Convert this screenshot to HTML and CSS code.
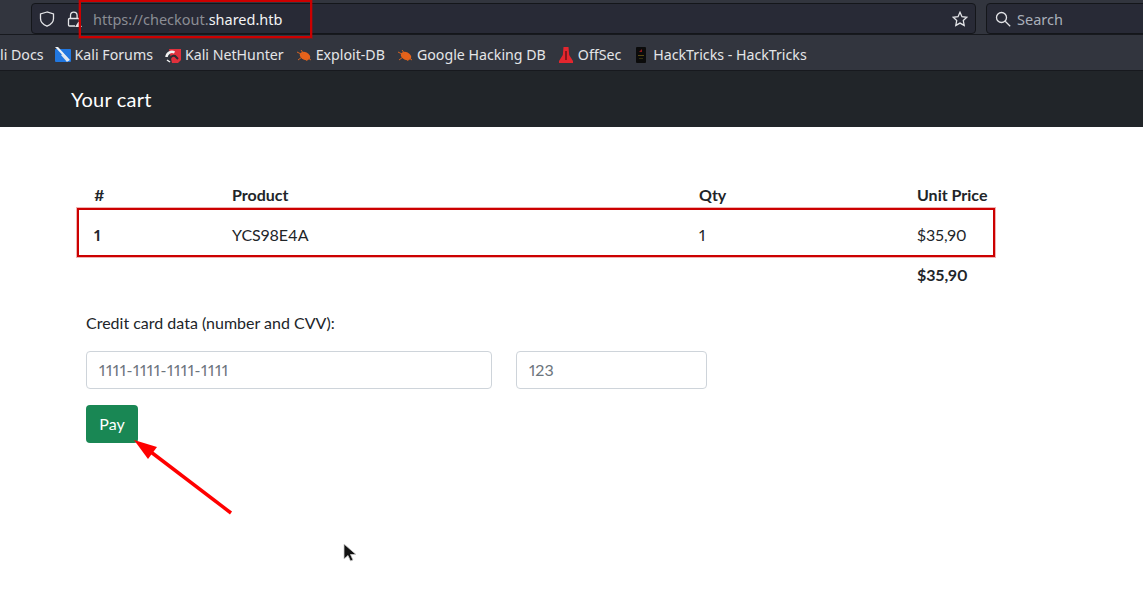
FILE: index.html
```html
<!DOCTYPE html>
<html lang="en">
<head>
    <meta charset="UTF-8">
    <link rel="stylesheet" href="styles.css">
    <title>Your cart</title>
</head>
<body>
    <div class="browser">
        <div class="toolbar">
            <div class="urlbar">
                <svg class="ui-icon shield" viewBox="0 0 16 16"><path d="M8 1 1.500 3v4.600c0 3.600 2.800 6.200 6.500 7.600 3.700-1.400 6.500-4 6.500-7.600V3z"/></svg>
                <svg class="ui-icon lock" viewBox="0 0 16 16">
                    <path d="M4.500 7.500V4.500a3.300 3.300 0 0 1 6.600 0v3"/>
                    <path d="M9 15H3.500a1 1 0 0 1-1-1V8.500a1 1 0 0 1 1-1h9a1 1 0 0 1 1 1v1.500"/>
                    <path class="lock-warn" d="M12.500 10.500 16 16H9z"/>
                </svg>
                <span class="url"><span class="url-dim">https://checkout.</span>shared.htb</span>
                <svg class="ui-icon star" viewBox="0 0 16 16"><path d="M8 1.300 10 5.700l4.800.6-3.500 3.300.9 4.800L8 12.100l-4.200 2.300.9-4.800L1.200 6.300 6 5.700z"/></svg>
            </div>
            <div class="searchbar">
                <svg class="ui-icon" viewBox="0 0 16 16"><circle cx="6.500" cy="6.500" r="5"/><path d="m10.200 10.200 5 5"/></svg>
                <span>Search</span>
            </div>
        </div>
        <div class="bookmarks">
            <span class="bookmark bookmark-first">li Docs</span>
            <span class="bookmark">
                <svg class="favicon" viewBox="0 0 16 16"><rect y="2" width="16" height="13" rx="1" fill="#2177e0"/><path d="M0 0 13 14l2-1L3 0z" fill="#eef2f6"/><path d="M6 8l6 7 2-2-6-6z" fill="#dfe6ee"/></svg>
                Kali Forums
            </span>
            <span class="bookmark">
                <svg class="favicon" viewBox="0 0 16 16"><path d="M4 2h12v11l-3 3H7z" fill="#e0303c"/><path d="M1.500 10a5.500 5.500 0 0 1 8-4.500" fill="none" stroke="#f2f2f2" stroke-width="2.500"/><path d="M5 14a4 4 0 0 1 5-5l3 3" fill="none" stroke="#2b2d33" stroke-width="2"/><path d="M2 13l3 2" stroke="#f2f2f2" stroke-width="1.500"/></svg>
                Kali NetHunter
            </span>
            <span class="bookmark">
                <svg class="favicon" viewBox="0 0 16 16"><ellipse cx="9" cy="9" rx="5.500" ry="3.800" fill="#e8621a" transform="rotate(25 9 9)"/><path d="M1 5l6 3M2 13l4-3M15 13l-3-2M5 3l3 4M11 14l-1-3" stroke="#d9641f" fill="none"/></svg>
                Exploit-DB
            </span>
            <span class="bookmark">
                <svg class="favicon" viewBox="0 0 16 16"><ellipse cx="9" cy="9" rx="5.500" ry="3.800" fill="#e8621a" transform="rotate(25 9 9)"/><path d="M1 5l6 3M2 13l4-3M15 13l-3-2M5 3l3 4M11 14l-1-3" stroke="#d9641f" fill="none"/></svg>
                Google Hacking DB
            </span>
            <span class="bookmark">
                <svg class="favicon" viewBox="0 0 16 16"><path d="M5.500 0h5l.7 8 3.800 6v2H1v-2l3.800-6z" fill="#e3262e"/><path d="M7.400 4h1.200v9H7.400z" fill="#4a0d10"/></svg>
                OffSec
            </span>
            <span class="bookmark">
                <svg class="favicon" viewBox="0 0 16 16"><rect x="3" width="10" height="16" rx="1" fill="#0b0b0b"/><path d="M6 5l3-3v3z" fill="#8e1a1a"/><path d="M5 8h6v1H5z" fill="#5a4a12"/><path d="M6 11h4v1H6z" fill="#33300f"/></svg>
                HackTricks - HackTricks
            </span>
        </div>
    </div>

    <header class="navbar">
        <span class="brand">Your cart</span>
    </header>

    <main class="content">
        <table class="cart">
            <thead>
                <tr>
                    <th class="col-num">#</th>
                    <th class="col-product">Product</th>
                    <th class="col-qty">Qty</th>
                    <th>Unit Price</th>
                </tr>
            </thead>
            <tbody>
                <tr>
                    <th>1</th>
                    <td>YCS98E4A</td>
                    <td>1</td>
                    <td>$35,90</td>
                </tr>
                <tr>
                    <td></td>
                    <td></td>
                    <td></td>
                    <th>$35,90</th>
                </tr>
            </tbody>
        </table>

        <form class="pay-form">
            <label class="card-label" for="number">Credit card data (number and CVV):</label>
            <div class="card-fields">
                <input class="field field-number" type="text" id="number" placeholder="1111-1111-1111-1111">
                <input class="field field-cvv" type="text" id="cvv" placeholder="123">
            </div>
            <button class="pay" type="button">Pay</button>
        </form>
    </main>

    <div class="mark mark-url"></div>
    <div class="mark mark-row"></div>
    <svg class="arrow" viewBox="0 0 1143 596">
        <path d="M231 513 147 449" stroke="#ff0000" stroke-width="3.500" fill="none"/>
        <path d="M134 440 157 447 148 459z" fill="#ff0000"/>
    </svg>
    <svg class="cursor" viewBox="0 0 14 20"><path d="M1 1v15l4-3.500 2.500 5.500 2.500-1-2.500-5.500H13z" fill="#111" stroke="#ccc" stroke-width=".8"/></svg>
</body>
</html>
```

FILE: styles.css
```css
html, body {
  margin: 0;
  height: 596px;
  overflow: hidden;
}

body {
  position: relative;
  background: #fff;
  color: #212529;
  font-family: Lato, sans-serif;
  font-size: 16px;
  font-variant-numeric: proportional-nums;
}

/* browser chrome */
.browser {
  background: #32353e;
  color: #e4e5e8;
  font-family: "Noto Sans", sans-serif;
  font-size: 14.2px;
}

.toolbar {
  display: flex;
  gap: 10px;
  box-sizing: border-box;
  height: 35px;
  padding-top: 3px;
  padding-left: 31px;
  border-bottom: 1px solid #17191e;
}

.urlbar, .searchbar {
  display: flex;
  align-items: center;
  height: 31px;
  background: #282a36;
  border: 1px solid #14161a;
  border-radius: 4px;
  box-sizing: border-box;
}

.urlbar {
  width: 945px;
  padding-left: 7px;
  padding-right: 7px;
  font-size: 14.5px;
}

.searchbar {
  flex: 1;
  padding-left: 8px;
  gap: 6px;
  margin-right: -4px;
  color: #aab0ba;
  font-size: 14.5px;
}

.ui-icon {
  width: 16px;
  height: 16px;
  flex: none;
  fill: none;
  stroke: #e4e5e8;
  stroke-width: 1.300;
}

.lock {
  margin-left: 11px;
}

.lock-warn {
  fill: #e4e5e8;
  stroke: none;
}

.url {
  flex: 1;
  margin-left: 11px;
  color: #f3f3f4;
}

.url-dim {
  color: #8b8d94;
}

.bookmarks {
  display: flex;
  align-items: center;
  gap: 12px;
  box-sizing: border-box;
  height: 36px;
  padding-top: 4px;
  border-bottom: 1px solid #17191e;
}

.bookmark {
  display: flex;
  align-items: center;
  gap: 4px;
  white-space: nowrap;
}

.bookmark-first {
  margin-right: -1px;
}

.favicon {
  width: 16px;
  height: 16px;
  flex: none;
}

/* page */
.navbar {
  display: flex;
  align-items: center;
  height: 56px;
  padding-left: 71px;
  background: #212529;
}

.brand {
  color: #fff;
  font-size: 20px;
  letter-spacing: .2px;
}

.content {
  padding: 48px 0 0 86px;
}

.cart {
  width: 910px;
  border-collapse: collapse;
}

.cart tr {
  height: 40px;
}

.cart th, .cart td {
  padding: 0 8px 2px;
  text-align: left;
  white-space: nowrap;
}

.col-num {
  width: 122px;
}

.col-product {
  width: 451px;
}

.col-qty {
  width: 202px;
}

.pay-form {
  margin-top: 16px;
}

.card-label {
  display: block;
  line-height: 24px;
}

.card-fields {
  display: flex;
  gap: 24px;
  margin-top: 16px;
}

.field {
  height: 38px;
  box-sizing: border-box;
  padding: 0 12px 2px;
  border: 1px solid #ced4da;
  border-radius: 4px;
  color: #212529;
  font-family: inherit;
  font-size: 16px;
  font-variant-numeric: inherit;
}

.field::placeholder {
  color: #6c757d;
}

.field-number {
  width: 406px;
  letter-spacing: .55px;
}

.field-cvv {
  width: 191px;
}

.pay {
  display: block;
  width: 52px;
  height: 38px;
  margin-top: 16px;
  padding: 0 0 2px;
  border: none;
  border-radius: 4px;
  background: #198754;
  color: #fff;
  font-family: inherit;
  font-size: 16px;
}

/* annotations drawn over the screenshot */
.mark {
  position: absolute;
  box-sizing: border-box;
  border: 2px solid #cc0000;
  box-shadow: 0 0 0 1px rgba(204, 0, 0, .3);
}

.mark-url {
  left: 79px;
  top: 0;
  width: 233px;
  height: 38px;
}

.mark-row {
  left: 77px;
  top: 208px;
  width: 918px;
  height: 49px;
}

.arrow {
  position: absolute;
  left: 0;
  top: 0;
  width: 1143px;
  height: 596px;
  pointer-events: none;
}

.cursor {
  position: absolute;
  left: 343px;
  top: 543px;
  width: 14px;
  height: 20px;
}
```
